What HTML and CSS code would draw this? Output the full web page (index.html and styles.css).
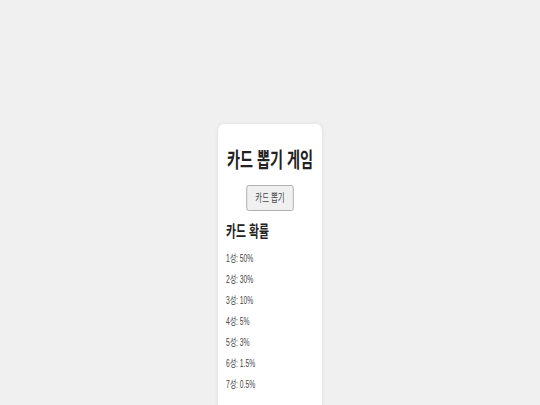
FILE: index.html
```html
<!DOCTYPE html>
<html lang="ko">
<head>
    <meta charset="UTF-8">
    <meta name="viewport" content="width=device-width, initial-scale=1.0">
    <title>카드 뽑기 게임</title>
    <link rel="stylesheet" href="styles.css">
</head>
<body>
    <div class="page">
        <div class="container">
            <h1>카드 뽑기 게임</h1>
            <div class="actions">
                <button class="button">카드 뽑기</button>
            </div>

            <h2>카드 확률</h2>
            <div class="rates">
                <p>1성: 50%</p>
                <p>2성: 30%</p>
                <p>3성: 10%</p>
                <p>4성: 5%</p>
                <p>5성: 3%</p>
                <p>6성: 1.5%</p>
                <p>7성: 0.5%</p>
            </div>
        </div>
    </div>
</body>
</html>
```

FILE: styles.css
```css
html, body {
    margin: 0;
    height: 100%;
    overflow: hidden;
}
body {
    font-family: "Liberation Sans", "Noto Sans CJK KR", sans-serif;
    background-color: #f0f0f0;
    color: #222;
}
.page {
    display: flex;
    justify-content: center;
    padding-top: 124px;
}
/* the whole card is drawn narrow, as in the squeezed screenshot */
.container {
    flex: none;
    width: 130px;
    background: white;
    padding: 22px 12px 30px;
    border-radius: 8px;
    box-shadow: 0 0 6px rgba(0,0,0,0.08);
    transform: scaleX(0.675);
    transform-origin: center top;
}
h1 {
    font-size: 21px;
    line-height: 28px;
    margin: 0 0 11px;
    text-align: center;
    white-space: nowrap;
}
.actions {
    text-align: center;
}
.button {
    font-family: inherit;
    font-size: 11px;
    line-height: 13px;
    padding: 6px 12px 5px;
    color: #444;
    background-color: #f0f0f0;
    border: 1px solid #a0a0a0;
    border-radius: 3px;
    cursor: pointer;
}
h2 {
    font-size: 16px;
    line-height: 20px;
    margin: 11px 0 6px;
}
.rates p {
    margin: 0;
    font-size: 10px;
    line-height: 21px;
    color: #444;
}
```
